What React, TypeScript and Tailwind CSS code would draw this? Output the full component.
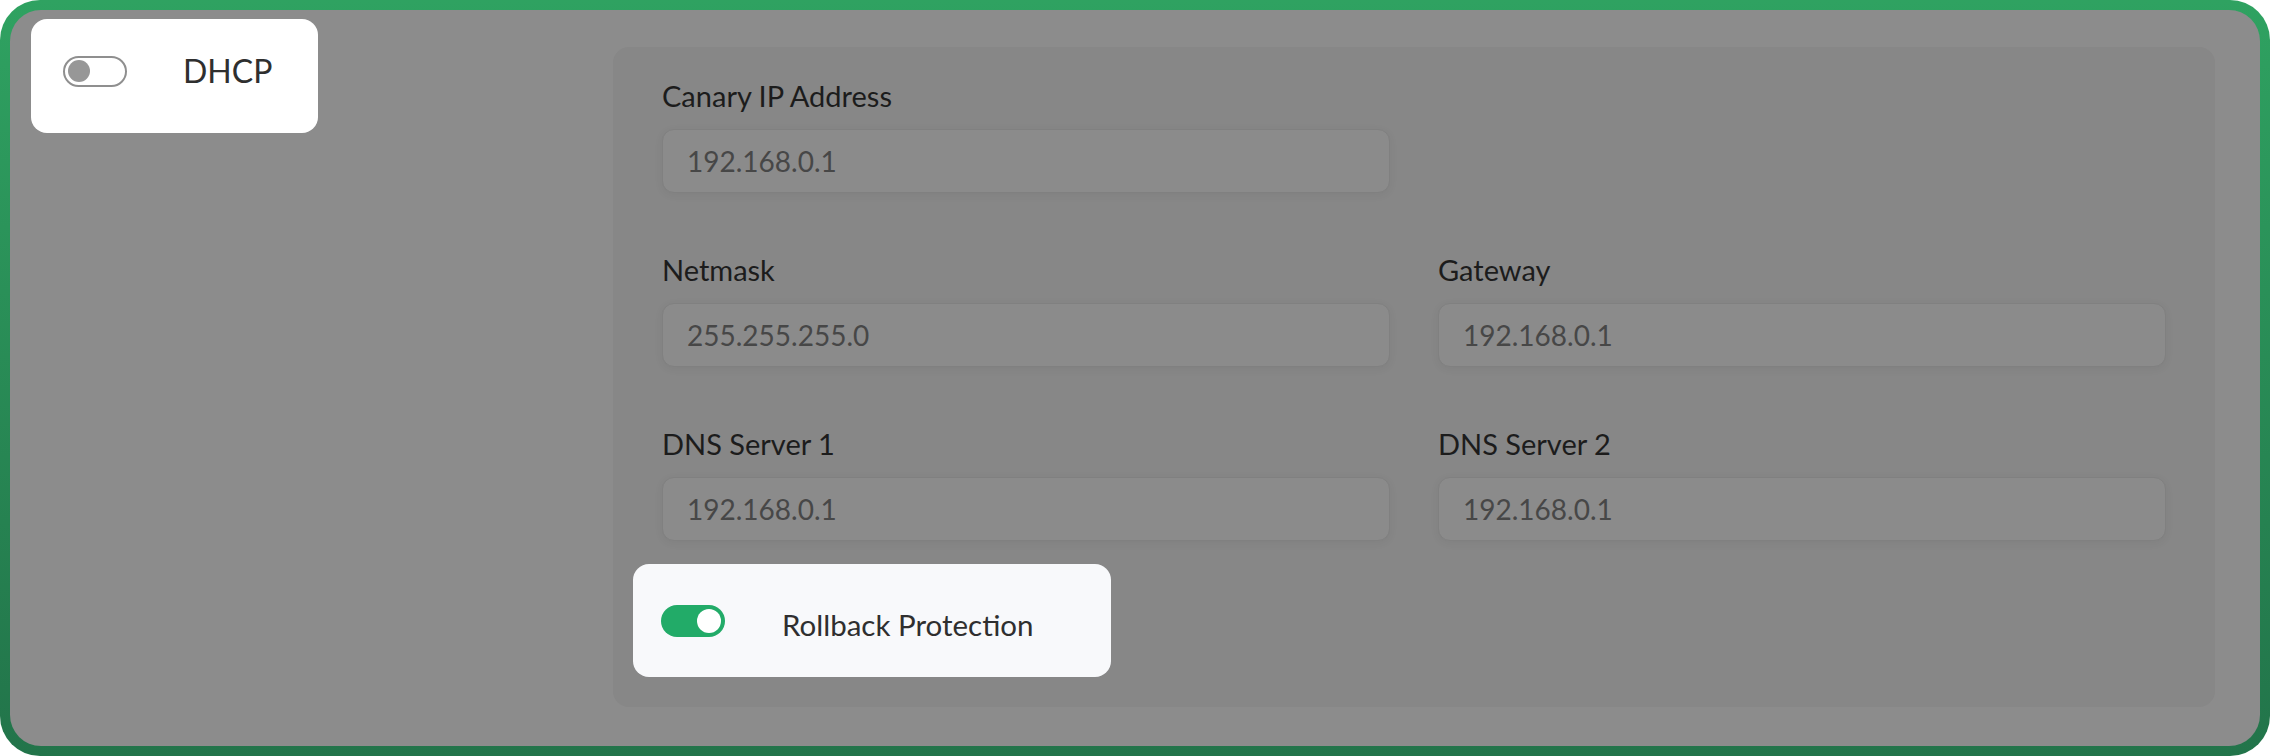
import React, { useState } from "react";

const fields = [
  [{ label: "Canary IP Address", value: "192.168.0.1" }],
  [
    { label: "Netmask", value: "255.255.255.0" },
    { label: "Gateway", value: "192.168.0.1" },
  ],
  [
    { label: "DNS Server 1", value: "192.168.0.1" },
    { label: "DNS Server 2", value: "192.168.0.1" },
  ],
];

const Toggle = ({ on, onClick }: { on: boolean; onClick: () => void }) => (
  <button
    type="button"
    role="switch"
    aria-checked={on}
    onClick={onClick}
    className={
      on
        ? "flex h-[32px] w-[64px] shrink-0 items-center justify-end rounded-full bg-[#22ab68] px-[4px]"
        : "flex h-[31px] w-[64px] shrink-0 items-center justify-start rounded-full border-2 border-[#8f8f8f] bg-white px-[3px]"
    }
  >
    <span
      className={
        on
          ? "h-[24px] w-[24px] rounded-full bg-white"
          : "h-[22px] w-[22px] rounded-full bg-[#979797]"
      }
    />
  </button>
);

const Field = ({ label, value }: { label: string; value: string }) => (
  <div className="flex flex-col">
    <label className="h-[34px] text-[29px] leading-[34px] text-[#1c1c1c]">
      {label}
    </label>
    <div className="mt-[16px] flex h-[64px] items-center rounded-[12px] border border-[#808080] bg-[#8b8b8b] px-[24px] text-[28px] text-[#474747] shadow-[0_2px_10px_rgba(0,0,0,0.05)]">
      {value}
    </div>
  </div>
);

export default function App() {
  const [dhcp, setDhcp] = useState(false);
  const [rollback, setRollback] = useState(true);

  return (
    <div className="h-[756px] w-[2270px] rounded-[40px] bg-gradient-to-b from-[#2fa261] to-[#22744a] p-[10px] font-['Lato','Liberation_Sans',sans-serif]">
      <div className="flex h-full rounded-[31px] bg-[#8c8c8c]">
        <div className="w-[603px] shrink-0 pl-[21px] pt-[9px]">
          <div className="flex h-[114px] w-[287px] items-start rounded-[16px] bg-white px-[32px] pt-[36px]">
            <div className="flex h-[32px] items-center gap-[56px]">
              <Toggle on={dhcp} onClick={() => setDhcp(!dhcp)} />
              <span className="text-[32px] leading-none text-[#2f2f2f]">
                DHCP
              </span>
            </div>
          </div>
        </div>

        <div className="mb-[39px] mr-[45px] mt-[37px] flex flex-1 flex-col rounded-[16px] bg-[#878787] px-[49px] pb-[30px] pt-[32px]">
          <div className="flex flex-col gap-[60px]">
            {fields.map((row, i) => (
              <div key={i} className="grid grid-cols-2 gap-x-[48px]">
                {row.map((f) => (
                  <Field key={f.label} label={f.label} value={f.value} />
                ))}
              </div>
            ))}
          </div>

          <div className="-ml-[29px] mt-[23px] flex h-[113px] w-[478px] items-center gap-[57px] rounded-[16px] bg-[#f8f9fb] px-[28px]">
            <Toggle on={rollback} onClick={() => setRollback(!rollback)} />
            <span className="pt-[8px] text-[29.5px] leading-none text-[#2f2f2f]">
              Rollback Protection
            </span>
          </div>
        </div>
      </div>
    </div>
  );
}
